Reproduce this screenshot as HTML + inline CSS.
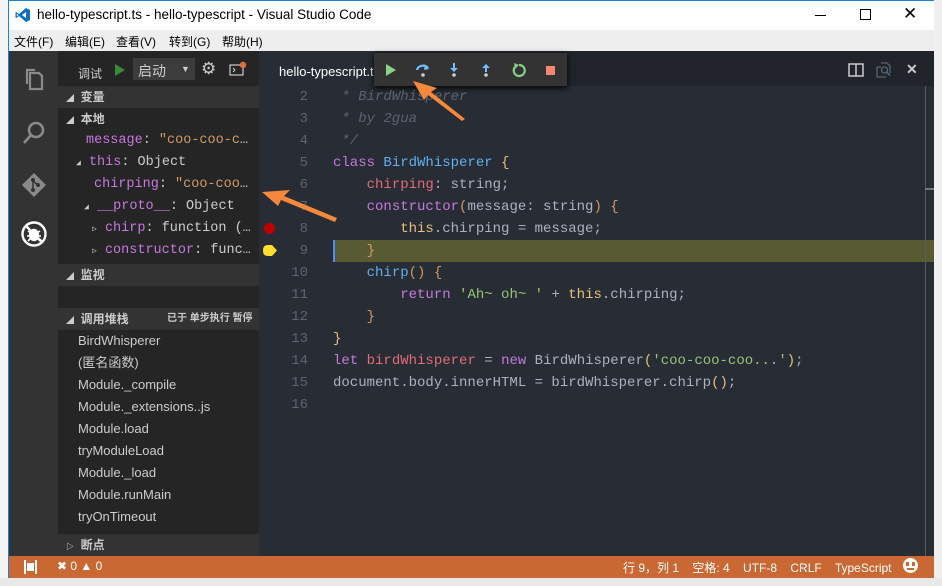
<!DOCTYPE html>
<html><head><meta charset="utf-8"><style>
*{margin:0;padding:0;box-sizing:border-box}
body{width:942px;height:586px;overflow:hidden;background:#fff;position:relative;font-family:"Liberation Sans","Noto Sans CJK SC",sans-serif}
.a{position:absolute}
.mono{font-family:"Liberation Mono","DejaVu Sans Mono",monospace;font-size:14px;white-space:pre}
.ln{position:absolute;left:259px;width:49px;text-align:right;color:#5c6370;height:22px;line-height:22px}
.cl{position:absolute;left:333px;height:22px;line-height:22px;color:#abb2bf}
.side{position:absolute;left:58px;width:201px;font-size:13px;color:#ccc;height:22px;line-height:22px;white-space:nowrap;overflow:hidden;text-overflow:ellipsis;padding-right:4px}
.hdr{background:#333334;font-weight:bold;font-size:12px}
.k{color:#c678dd}.t{color:#61afef}.r{color:#e06c75}.s{color:#98c379}.o{color:#d19a66}.y{color:#e5c07b}.c{color:#5c6370;font-style:italic}
.sv{font-family:"Liberation Mono",monospace;font-size:13.5px}
</style></head><body>
<div class="a" style="left:0;top:0;width:8px;height:586px;background:#f3f3f3"></div>
<div class="a" style="left:934px;top:0;width:8px;height:586px;background:#f0f0f0"></div>
<div class="a" style="left:0;top:578px;width:942px;height:8px;background:#e8e8e8"></div>
<div class="a" style="left:8px;top:0;width:926px;height:578px;border:1px solid #1883d7"></div>
<div class="a" style="left:9px;top:1px;width:925px;height:29px;background:#fff"></div>
<svg class="a" style="left:15px;top:7px" width="16" height="16" viewBox="0 0 16 16"><path d="M11 1 L15 3 V13 L11 15 L4 9 L1.5 11 L0.5 10.5 V5.5 L1.5 5 L4 7 Z M11 5 L7 8 L11 11 Z M1.8 6.5 V9.5 L3.5 8 Z" fill="#0e70c0" fill-rule="evenodd"/></svg>
<div class="a" style="left:37px;top:7px;font-size:13.5px;color:#000">hello-typescript.ts - hello-typescript - Visual Studio Code</div>
<div class="a" style="left:815px;top:15px;width:11px;height:1px;background:#000"></div>
<div class="a" style="left:860px;top:9px;width:11px;height:11px;border:1px solid #000"></div>
<div class="a" style="left:903px;top:4px;font-size:17px;color:#000">✕</div>
<div class="a" style="left:9px;top:30px;width:925px;height:21px;background:#eeeeee"></div>
<div class="a" style="left:14px;top:33px;font-size:12px;color:#000">文件(F)</div>
<div class="a" style="left:65px;top:33px;font-size:12px;color:#000">编辑(E)</div>
<div class="a" style="left:116px;top:33px;font-size:12px;color:#000">查看(V)</div>
<div class="a" style="left:169px;top:33px;font-size:12px;color:#000">转到(G)</div>
<div class="a" style="left:222px;top:33px;font-size:12px;color:#000">帮助(H)</div>
<div class="a" style="left:9px;top:51px;width:49px;height:505px;background:#333333"></div>
<svg class="a" style="left:22px;top:67px" width="24" height="24" viewBox="0 0 24 24" fill="none" stroke="#8a8a8a" stroke-width="2.2"><path d="M8 6 H17 L20 9 V22 H8 Z"/><path d="M5 17 V3 H13"/></svg>
<svg class="a" style="left:21px;top:120px" width="26" height="26" viewBox="0 0 26 26" fill="none" stroke="#8a8a8a" stroke-width="2.6"><circle cx="15" cy="10" r="7"/><path d="M10 15 L3 23"/></svg>
<svg class="a" style="left:21px;top:172px" width="26" height="26" viewBox="0 0 26 26"><path d="M13 1 L25 13 L13 25 L1 13 Z" fill="#8a8a8a"/><circle cx="12" cy="8" r="2" fill="#333"/><circle cx="12" cy="18" r="2" fill="#333"/><circle cx="17" cy="13" r="2" fill="#333"/><path d="M12 8 V18 M12 9 L17 13" stroke="#333" stroke-width="1.5"/></svg>
<svg class="a" style="left:20px;top:220px" width="28" height="28" viewBox="0 0 28 28" fill="none" stroke="#fff" stroke-width="2.4"><circle cx="14" cy="14" r="11.5"/><path d="M6 6 L22 22"/><ellipse cx="14" cy="15" rx="4" ry="5" fill="#fff"/><path d="M8 11 L11 13 M20 11 L17 13 M7 16 H10 M21 16 H18 M8 21 L11 18 M20 21 L17 18" stroke-width="1.6"/></svg>
<div class="a" style="left:58px;top:51px;width:201px;height:505px;background:#252526"></div>
<div class="a" style="left:78px;top:65px;font-size:12px;color:#ccc">调试</div>
<svg class="a" style="left:114px;top:63px" width="12" height="14"><path d="M1 1 L11 7 L1 13Z" fill="#388a34"/></svg>
<div class="a" style="left:133px;top:58px;width:62px;height:22px;background:#3c3c3c"></div>
<div class="a" style="left:138px;top:61px;font-size:14px;color:#ccc">启动</div>
<div class="a" style="left:181px;top:64px;font-size:9px;color:#ccc">▼</div>
<div class="a" style="left:201px;top:60px;font-size:17px;color:#ccc;line-height:18px">⚙</div>
<svg class="a" style="left:229px;top:61px" width="18" height="16"><rect x="1" y="4" width="13" height="10" fill="none" stroke="#ccc" stroke-width="1.2"/><path d="M4 7 L6 9 L4 11" stroke="#ccc" fill="none"/><circle cx="14" cy="4" r="3.2" fill="#e0703a"/></svg>
<div class="side hdr" style="top:86px;padding-left:8px"><span style="font-size:8px">◢</span>&nbsp;&nbsp;变量</div>
<div class="side" style="top:108px;padding-left:8px;font-weight:bold;font-size:12px"><span style="font-size:8px">◢</span>&nbsp;&nbsp;本地</div>
<div class="side sv" style="top:130px;padding-left:28px"><span class="k">message</span>: <span class="o">"coo-coo-coo...'</span></div>
<div class="side sv" style="top:152px;padding-left:18px"><span style="font-size:8px">◢</span> <span class="k">this</span>: Object</div>
<div class="side sv" style="top:174px;padding-left:36px"><span class="k">chirping</span>: <span class="o">"coo-coo-coo...'</span></div>
<div class="side sv" style="top:196px;padding-left:26px"><span style="font-size:8px">◢</span> <span class="k">__proto__</span>: Object</div>
<div class="side sv" style="top:218px;padding-left:34px"><span style="font-size:8px">▷</span> <span class="k">chirp</span>: function () {}</div>
<div class="side sv" style="top:240px;padding-left:34px"><span style="font-size:8px">▷</span> <span class="k">constructor</span>: function</div>
<div class="side hdr" style="top:264px;padding-left:8px"><span style="font-size:8px">◢</span>&nbsp;&nbsp;监视</div>
<div class="side hdr" style="top:308px;padding-left:8px"><span style="font-size:8px">◢</span>&nbsp;&nbsp;调用堆栈<span style="position:absolute;left:109px;font-size:10px">已于 单步执行 暂停</span></div>
<div class="side" style="top:330px;padding-left:20px">BirdWhisperer</div>
<div class="side" style="top:352px;padding-left:20px">(匿名函数)</div>
<div class="side" style="top:374px;padding-left:20px">Module._compile</div>
<div class="side" style="top:396px;padding-left:20px">Module._extensions..js</div>
<div class="side" style="top:418px;padding-left:20px">Module.load</div>
<div class="side" style="top:440px;padding-left:20px">tryModuleLoad</div>
<div class="side" style="top:462px;padding-left:20px">Module._load</div>
<div class="side" style="top:484px;padding-left:20px">Module.runMain</div>
<div class="side" style="top:506px;padding-left:20px">tryOnTimeout</div>
<div class="side hdr" style="top:534px;padding-left:8px"><span style="font-size:8px">▷</span>&nbsp;&nbsp;断点</div>
<div class="a" style="left:259px;top:51px;width:675px;height:505px;background:#282c34"></div>
<div class="a" style="left:259px;top:51px;width:675px;height:35px;background:#21252b"></div>
<div class="a" style="left:259px;top:51px;width:115px;height:35px;background:#282c34"></div>
<div class="a" style="left:279px;top:64px;font-size:13px;color:#fff">hello-typescript.t</div>
<svg class="a" style="left:848px;top:63px" width="16" height="14"><rect x="1" y="1" width="14" height="12" fill="none" stroke="#ccc" stroke-width="1.5"/><path d="M8 1 V13" stroke="#ccc" stroke-width="1.5"/></svg>
<svg class="a" style="left:876px;top:62px" width="16" height="16" fill="none" stroke="#5a6270" stroke-width="1.3"><path d="M1 5 H5 M1 5 V15 H10"/><path d="M5 1 H11 L14 4 V11"/><circle cx="8.5" cy="8" r="3"/><path d="M11 10.5 L14 13.5" stroke="#3a7ab8"/></svg>
<div class="a" style="left:906px;top:61px;font-size:14px;color:#ccc;font-weight:bold">✕</div>
<div class="a" style="left:374px;top:53px;width:193px;height:33px;background:#333333;box-shadow:0 2px 6px #000"></div>
<svg class="a" style="left:385px;top:63px" width="12" height="14"><path d="M1 1 L11 7 L1 13Z" fill="#89d185"/></svg>
<svg class="a" style="left:415px;top:62px" width="16" height="16"><path d="M2 8 A6 5 0 0 1 13 6" stroke="#75beff" stroke-width="2.2" fill="none"/><path d="M10 3 L14 7 L9 8Z" fill="#75beff"/><circle cx="8" cy="13" r="1.8" fill="#ccc"/></svg>
<svg class="a" style="left:448px;top:62px" width="12" height="16"><path d="M6 1 V8" stroke="#75beff" stroke-width="2"/><path d="M2 6 L6 10 L10 6Z" fill="#75beff"/><circle cx="6" cy="13" r="1.8" fill="#ccc"/></svg>
<svg class="a" style="left:480px;top:62px" width="12" height="16"><path d="M6 4 V10" stroke="#75beff" stroke-width="2"/><path d="M2 6 L6 2 L10 6Z" fill="#75beff"/><circle cx="6" cy="13" r="1.8" fill="#ccc"/></svg>
<svg class="a" style="left:511px;top:62px" width="16" height="16"><path d="M4 5 A5.5 5.5 0 1 0 8 3" stroke="#89d185" stroke-width="2.2" fill="none"/><path d="M3 1 L8 3 L4 7Z" fill="#89d185"/></svg>
<div class="a" style="left:546px;top:66px;width:9px;height:9px;background:#f48771"></div>
<div class="a" style="left:333px;top:240px;width:601px;height:22px;background:#585b31"></div>
<div class="a" style="left:333px;top:240px;width:2px;height:22px;background:#528bff"></div>
<div class="a" style="left:925px;top:86px;width:1px;height:470px;background:#5a5a5a"></div>
<div class="a" style="left:925px;top:188px;width:9px;height:2px;background:#777"></div>
<div class="a" style="left:264px;top:223px;width:11px;height:11px;border-radius:50%;background:#c10000"></div>
<svg class="a" style="left:262px;top:244px" width="16" height="13"><path d="M1 6.5 C1 2 3 1 7 1 H10 L15 6.5 L10 12 H7 C3 12 1 11 1 6.5Z" fill="#ffdf2e"/></svg>
<div class="mono">
<div class="ln" style="top:86px">2</div><div class="cl" style="top:86px"><span class="c"> * BirdWhisperer</span></div>
<div class="ln" style="top:108px">3</div><div class="cl" style="top:108px"><span class="c"> * by 2gua</span></div>
<div class="ln" style="top:130px">4</div><div class="cl" style="top:130px"><span class="c"> */</span></div>
<div class="ln" style="top:152px">5</div><div class="cl" style="top:152px"><span class="k">class</span> <span class="t">BirdWhisperer</span> <span class="y">{</span></div>
<div class="ln" style="top:174px">6</div><div class="cl" style="top:174px">    <span class="r">chirping</span>: string;</div>
<div class="ln" style="top:196px">7</div><div class="cl" style="top:196px">    <span class="k">constructor</span><span class="o">(</span>message: string<span class="o">)</span> <span class="o">{</span></div>
<div class="ln" style="top:218px">8</div><div class="cl" style="top:218px">        <span class="y">this</span>.chirping = message;</div>
<div class="ln" style="top:240px">9</div><div class="cl" style="top:240px">    <span class="o">}</span></div>
<div class="ln" style="top:262px">10</div><div class="cl" style="top:262px">    <span class="t">chirp</span><span class="o">()</span> <span class="o">{</span></div>
<div class="ln" style="top:284px">11</div><div class="cl" style="top:284px">        <span class="k">return</span> <span class="s">'Ah~ oh~ '</span> + <span class="y">this</span>.chirping;</div>
<div class="ln" style="top:306px">12</div><div class="cl" style="top:306px">    <span class="o">}</span></div>
<div class="ln" style="top:328px">13</div><div class="cl" style="top:328px"><span class="y">}</span></div>
<div class="ln" style="top:350px">14</div><div class="cl" style="top:350px"><span class="k">let</span> <span class="r">birdWhisperer</span> = <span class="k">new</span> BirdWhisperer<span class="y">(</span><span class="s">'coo-coo-coo...'</span><span class="y">)</span>;</div>
<div class="ln" style="top:372px">15</div><div class="cl" style="top:372px">document.body.innerHTML = birdWhisperer.chirp<span class="y">()</span>;</div>
<div class="ln" style="top:394px">16</div>
</div>
<svg class="a" style="left:0;top:0" width="942" height="586"><g fill="#f5883a"><path d="M262 192 L290 190 L284 196 L337 218 L335 222 L281 200 L278 206 Z"/><path d="M413 81 L437 88 L431 92 L465 119 L462 121 L428 95 L424 100 Z"/></g></svg>
<div class="a" style="left:9px;top:556px;width:925px;height:22px;background:#ca6833"></div>
<div class="a" style="left:24px;top:560px;width:13px;height:14px;border:2px solid #fff;border-top:none;border-bottom:none"></div>
<div class="a" style="left:27px;top:563px;width:7px;height:8px;background:#fff"></div>
<div class="a" style="left:57px;top:559px;font-size:12px;color:#fff">✖ 0 ▲ 0</div>
<div class="a" style="left:623px;top:559px;font-size:12px;color:#fff;white-space:pre">行 9，列 1    空格: 4    UTF-8    CRLF    TypeScript</div>
<div class="a" style="left:903px;top:558px;width:15px;height:15px;border-radius:50%;background:#fff"></div>
<div class="a" style="left:906px;top:562px;width:3px;height:4px;background:#ca6833"></div>
<div class="a" style="left:912px;top:562px;width:3px;height:4px;background:#ca6833"></div>
<div class="a" style="left:907px;top:568px;width:7px;height:2px;background:#ca6833"></div>
</body></html>
